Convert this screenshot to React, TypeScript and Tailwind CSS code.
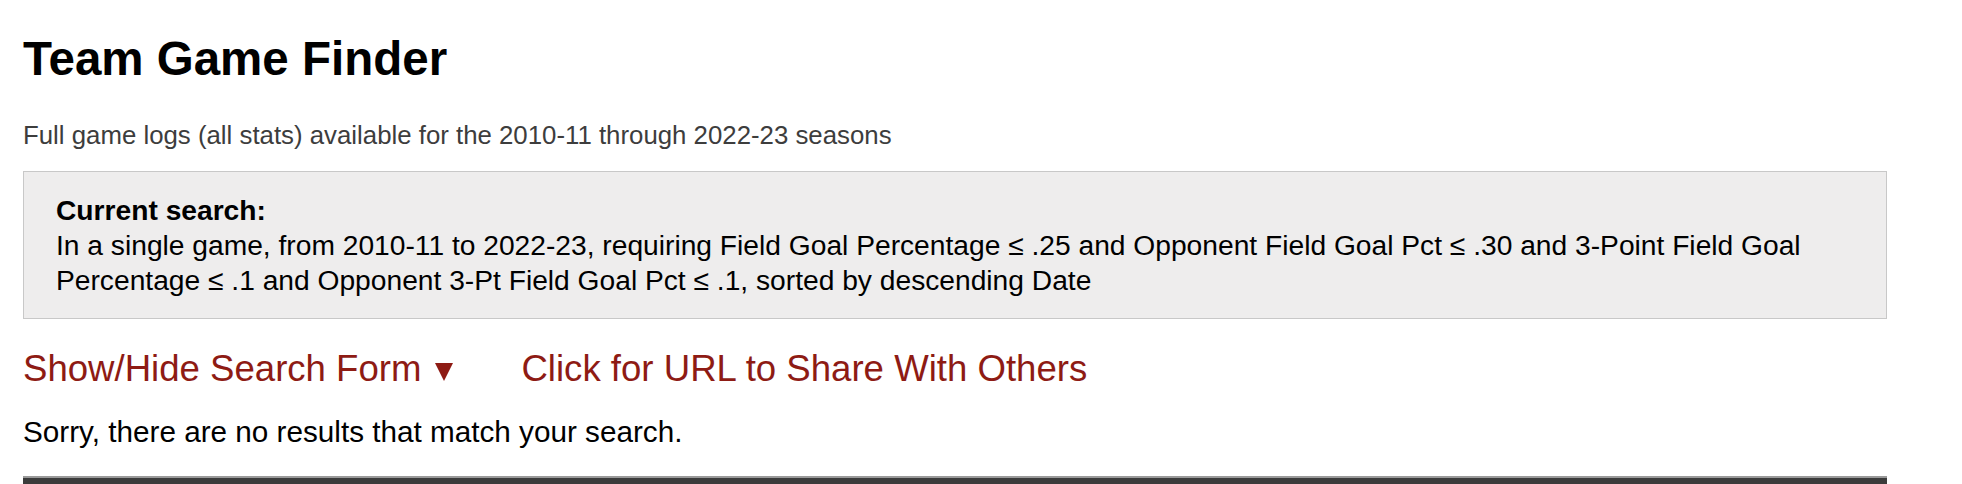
import React from 'react';

const font = { fontFamily: '"Liberation Sans", Arial, Helvetica, sans-serif' };

const App: React.FC = () => {
  return (
    <div className="min-h-screen bg-white overflow-hidden" style={font}>
      <div className="w-[1864px] ml-[23px] pt-[31px]">
        <h1 className="text-[47.5px] leading-[56px] font-bold text-black">Team Game Finder</h1>
        <p className="mt-[33px] text-[25.8px] leading-[31px] text-[#3d3d3d]">
          Full game logs (all stats) available for the 2010-11 through 2022-23 seasons
        </p>

        <div className="mt-[20px] border border-[#c8c8c8] bg-[#eeeded] pl-[32px] pr-[20px] pt-[21px] pb-[20px] text-[28.2px] leading-[35px] text-black">
          <strong className="font-bold">Current search:</strong>
          <p>
            In a single game, from 2010-11 to 2022-23, requiring Field Goal Percentage ≤ .25 and Opponent Field Goal Pct ≤ .30 and 3-Point Field Goal
            Percentage ≤ .1 and Opponent 3-Pt Field Goal Pct ≤ .1, sorted by descending Date
          </p>
        </div>

        <div className="mt-[28px] flex items-baseline text-[36.6px] leading-[43px] text-[#8e1b14]">
          <a href="#" className="flex items-baseline">
            Show/Hide Search Form
            <svg width="18" height="18" viewBox="0 0 18 18" className="ml-[14px]">
              <polygon points="0,0 18,0 9,18" fill="#8e1b14" />
            </svg>
          </a>
          <a href="#" className="ml-[68px]">Click for URL to Share With Others</a>
        </div>

        <p className="mt-[24px] text-[29.7px] leading-[36px] text-black">
          Sorry, there are no results that match your search.
        </p>

        <div className="mt-[26px] h-[30px] border-t-2 border-[#9a9a9a] bg-[#3b3b3b]" />
      </div>
    </div>
  );
};

export default App;
